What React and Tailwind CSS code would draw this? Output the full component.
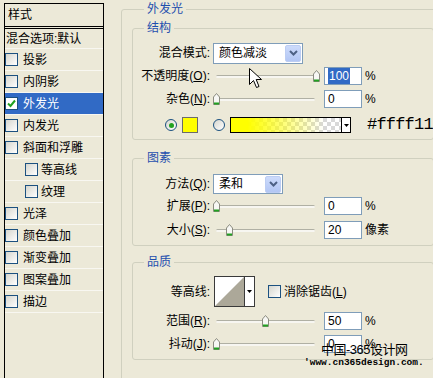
import React from "react";

const Check = ({ on }) => (
  <span
    className={`w-[13px] h-[13px] shrink-0 border border-[#1c5180] flex items-center justify-center ${
      on ? "bg-white" : "bg-linear-to-br from-[#d6d6ce] to-white"
    }`}
  >
    {on && (
      <svg width="9" height="9" viewBox="0 0 9 9">
        <path d="M1 4.5 L3.5 7 L8 1.5" fill="none" stroke="#21a121" strokeWidth="2" />
      </svg>
    )}
  </span>
);

const Radio = ({ on }) => (
  <span className="w-[12px] h-[12px] shrink-0 rounded-full border border-[#1c5180] bg-linear-to-br from-[#d6d6ce] to-white flex items-center justify-center">
    {on && <span className="w-[5px] h-[5px] rounded-full bg-[#21a121]" />}
  </span>
);

const Slider = ({ pos }) => (
  <div className="relative w-[107px] h-[12px] flex items-center">
    <div className="ml-[3px] w-[99px] h-[3px] rounded-full border-t border-[#b0b0a4] bg-[#f7f6f1]" />
    <svg className={`absolute top-0 ${pos}`} width="7" height="12" viewBox="0 0 7 12">
      <path d="M0.5 4 L3.5 0.5 L6.5 4 L6.5 11.5 L0.5 11.5 Z" fill="#f7f7f4" stroke="#8b8b7f" />
      <path d="M1 10.5 H6" stroke="#21a121" strokeWidth="2" />
    </svg>
  </div>
);

const Num = ({ v, sel }) => (
  <div className="ml-[4px] w-[38px] h-[18px] bg-white border border-[#7f9db9] flex items-center pl-[3px]">
    {sel ? <span className="bg-[#316ac5] text-white px-[1px]">{v}</span> : v}
  </div>
);

const Combo = ({ w, h, text }) => (
  <div className={`ml-[3px] ${w} ${h} border border-[#7f9db9] bg-white flex items-center`}>
    <span className="flex-1 pl-[5px]">{text}</span>
    <span className="w-[16px] h-[17px] mr-[1px] rounded-[2px] bg-linear-to-b from-[#cddbfb] to-[#b2c6f4] border border-[#bccdf3] flex items-center justify-center">
      <svg width="9" height="6" viewBox="0 0 9 6">
        <path d="M1 1 L4.5 4.5 L8 1" fill="none" stroke="#4d6185" strokeWidth="2" />
      </svg>
    </span>
  </div>
);

const Row = ({ label, className, children }) => (
  <div className={`flex items-center ${className}`}>
    <div className="w-[77px] text-right whitespace-nowrap">{label}</div>
    {children}
  </div>
);

const Legend = ({ children }) => (
  <legend className="ml-[11px] px-[3px] leading-[16px] text-[#1f4fae]">{children}</legend>
);

const styleItems = [
  ["投影"],
  ["内阴影"],
  ["外发光", true],
  ["内发光"],
  ["斜面和浮雕"],
  ["等高线", false, true],
  ["纹理", false, true],
  ["光泽"],
  ["颜色叠加"],
  ["渐变叠加"],
  ["图案叠加"],
  ["描边"],
];

export default function App() {
  return (
    <div className="relative w-[433px] h-[378px] overflow-hidden bg-[#ece9d8] flex items-start text-[12px] leading-[16px] text-black font-['Liberation_Sans','Noto_Sans_CJK_SC',sans-serif]">
      {/* styles list */}
      <div className="ml-[4px] mt-[3px] w-[100px] h-[400px] shrink-0 border border-black flex flex-col">
        <div className="h-[25px] flex items-center pl-[3px] border-b-[3px] border-double border-black">样式</div>
        <div className="h-[20px] flex items-center pl-[1px] border-b border-[#f8f7f1]">混合选项:默认</div>
        {styleItems.map(([name, sel, indent]) => (
          <div
            key={name}
            className={`h-[22px] flex items-center border-b border-[#f8f7f1] ${indent ? "pl-[20px] gap-[3px]" : "gap-[5px]"} ${
              sel ? "bg-[#316ac5] text-white" : ""
            }`}
          >
            <Check on={sel} />
            <span>{name}</span>
          </div>
        ))}
      </div>

      {/* outer glow settings */}
      <fieldset className="mt-[1px] ml-[17px] w-[310px] shrink-0 border border-[#d0d0bf] rounded-[3px] pl-[10px] pr-[6px] pt-[3px] pb-[30px]">
        <legend className="ml-[12px] px-[3px] leading-[16px] text-[#1f4fae]">外发光</legend>

        <fieldset className="border border-[#d0d0bf] rounded-[3px] flex flex-col pb-[5px]">
          <Legend>结构</Legend>
          <Row className="mt-[6px] h-[22px]" label="混合模式:">
            <Combo w="w-[90px]" h="h-[21px]" text="颜色减淡" />
          </Row>
          <Row className="mt-[2px] h-[20px]" label={<>不透明度(<u>O</u>):</>}>
            <div className="ml-[3px]"><Slider pos="left-[100px]" /></div>
            <Num v="100" sel />
            <span className="ml-[3px]">%</span>
          </Row>
          <Row className="mt-[3px] h-[20px]" label={<>杂色(<u>N</u>):</>}>
            <div className="ml-[3px]"><Slider pos="left-0" /></div>
            <Num v="0" />
            <span className="ml-[3px]">%</span>
          </Row>
          <div className="mt-[7px] h-[18px] flex items-center pl-[32px]">
            <Radio on />
            <span className="ml-[5px] w-[16px] h-[16px] border border-[#6b6b6b] bg-[#ffff00]" />
            <span className="ml-[15px]"><Radio /></span>
            <div className="ml-[5px] w-[121px] h-[16px] border border-black flex bg-[repeating-conic-gradient(#d8d8d8_0_25%,#ffffff_0_50%)] bg-[length:8px_8px]">
              <div className="flex-1 bg-linear-to-r from-[#ffff00] from-[15%] to-[rgba(255,255,0,0)] to-[85%]" />
              <div className="w-[9px] bg-white border-l border-black flex items-center justify-center">
                <svg width="5" height="3" viewBox="0 0 5 3"><path d="M0 0 H5 L2.5 3 Z" fill="#000" /></svg>
              </div>
            </div>
            <span className="relative ml-[16px] whitespace-nowrap bg-[#ece9d8] font-['Liberation_Mono',monospace] text-[17px] leading-[18px] tracking-[-0.8px]">#ffff11</span>
          </div>
        </fieldset>

        <fieldset className="mt-[10px] border border-[#d0d0bf] rounded-[3px] flex flex-col pb-[5px]">
          <Legend>图素</Legend>
          <Row className="mt-[8px] h-[20px]" label={<>方法(<u>Q</u>):</>}>
            <Combo w="w-[70px]" h="h-[20px]" text="柔和" />
          </Row>
          <Row className="mt-[2px] h-[20px]" label={<>扩展(<u>P</u>):</>}>
            <div className="ml-[3px]"><Slider pos="left-0" /></div>
            <Num v="0" />
            <span className="ml-[3px]">%</span>
          </Row>
          <Row className="mt-[4px] h-[20px]" label={<>大小(<u>S</u>):</>}>
            <div className="ml-[3px]"><Slider pos="left-[13px]" /></div>
            <Num v="20" />
            <span className="ml-[3px]">像素</span>
          </Row>
        </fieldset>

        <fieldset className="mt-[8px] border border-[#d0d0bf] rounded-[3px] flex flex-col pb-[5px]">
          <Legend>品质</Legend>
          <Row className="mt-[6px] h-[31px]" label="等高线:">
            <div className="ml-[4px] w-[41px] h-[31px] border border-[#3a3a3a] flex bg-white">
              <svg width="29" height="29" viewBox="0 0 29 29">
                <rect width="29" height="29" fill="#fff" />
                <path d="M0 29 L29 0 L29 29 Z" fill="#aca899" />
              </svg>
              <div className="flex-1 border-l border-[#3a3a3a] flex items-center justify-center">
                <svg width="5" height="3" viewBox="0 0 5 3"><path d="M0 0 H5 L2.5 3 Z" fill="#000" /></svg>
              </div>
            </div>
            <span className="ml-[13px]"><Check /></span>
            <span className="ml-[3px]">消除锯齿(<u>L</u>)</span>
          </Row>
          <Row className="mt-[4px] h-[20px]" label={<>范围(<u>R</u>):</>}>
            <div className="ml-[3px]"><Slider pos="left-[49px]" /></div>
            <Num v="50" />
            <span className="ml-[3px]">%</span>
          </Row>
          <Row className="mt-[3px] h-[20px]" label={<>抖动(<u>J</u>):</>}>
            <div className="ml-[3px]"><Slider pos="left-0" /></div>
            <Num v="0" />
            <span className="ml-[3px]">%</span>
          </Row>
        </fieldset>
      </fieldset>

      {/* mouse pointer */}
      <svg className="absolute left-[249px] top-[68px]" width="13" height="21" viewBox="0 0 13 21">
        <path d="M0.5 0.5 L0.5 16.5 L4.5 12.5 L7.5 19.5 L10 18.5 L7.2 11.5 L12.5 11.5 Z" fill="#fff" stroke="#000" strokeLinejoin="round" />
      </svg>

      {/* watermark */}
      <div className="absolute left-[321px] top-[342px] text-[13px] leading-[16px] tracking-[-0.5px] whitespace-nowrap">中国-365设计网</div>
      <div className="absolute left-[304px] top-[357px] font-['Liberation_Mono',monospace] font-bold text-[9.5px] leading-[12px] whitespace-nowrap">'www.cn365design.com.</div>
    </div>
  );
}
